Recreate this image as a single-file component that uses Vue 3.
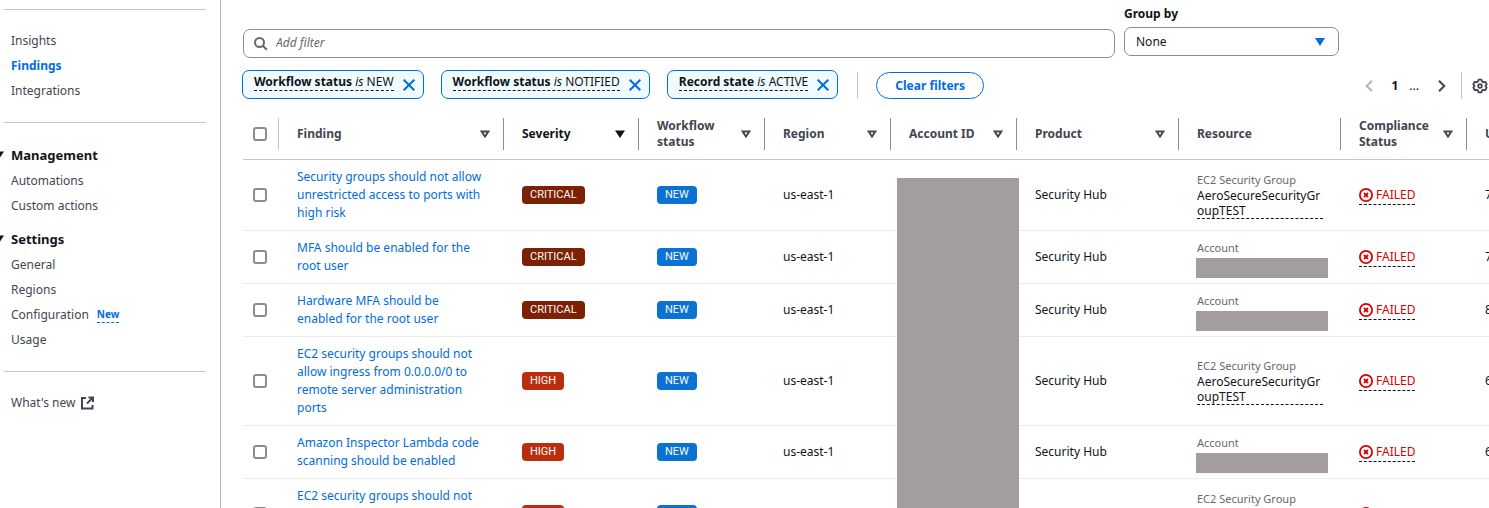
<script setup>
import { ref } from 'vue'

const mainLinks = ['Insights', 'Findings', 'Integrations']
const groups = [
  { title: 'Management', links: [{ text: 'Automations' }, { text: 'Custom actions' }] },
  {
    title: 'Settings',
    links: [{ text: 'General' }, { text: 'Regions' }, { text: 'Configuration', isNew: true }, { text: 'Usage' }],
  },
]

const groupBy = ref('None')
const filters = [
  { field: 'Workflow status', value: 'NEW' },
  { field: 'Workflow status', value: 'NOTIFIED' },
  { field: 'Record state', value: 'ACTIVE' },
]

const columns = [
  { label: 'Finding', cls: 'c-finding', sort: true },
  { label: 'Severity', cls: 'c-severity', sort: true, active: true },
  { label: 'Workflow\nstatus', cls: 'c-medium', sort: true },
  { label: 'Region', cls: 'c-medium', sort: true },
  { label: 'Account ID', cls: 'c-medium', sort: true },
  { label: 'Product', cls: 'c-wide', sort: true },
  { label: 'Resource', cls: 'c-wide' },
  { label: 'Compliance\nStatus', cls: 'c-medium', sort: true },
  { label: 'Updated at', cls: 'c-medium' },
]

const rows = [
  { title: 'Security groups should not allow\nunrestricted access to ports with\nhigh risk', severity: 'CRITICAL', group: true, updated: '7 days ago' },
  { title: 'MFA should be enabled for the\nroot user', severity: 'CRITICAL', updated: '7 days ago' },
  { title: 'Hardware MFA should be\nenabled for the root user', severity: 'CRITICAL', updated: '8 days ago' },
  { title: 'EC2 security groups should not\nallow ingress from 0.0.0.0/0 to\nremote server administration\nports', severity: 'HIGH', group: true, updated: '6 days ago' },
  { title: 'Amazon Inspector Lambda code\nscanning should be enabled', severity: 'HIGH', updated: '6 days ago' },
  { title: 'EC2 security groups should not\nallow ingress from ::/0 to remote\nserver administration ports', severity: 'HIGH', group: true, updated: '6 days ago' },
]
</script>

<template>
  <div class="app">
    <nav class="sidebar" aria-label="Security Hub">
      <hr />
      <a v-for="l in mainLinks" :key="l" href="#" class="nav-link" :class="{ current: l === 'Findings' }">{{ l }}</a>
      <hr />
      <section v-for="g in groups" :key="g.title" class="group">
        <button type="button" class="group-head">
          <svg class="group-caret" width="10" height="8" viewBox="0 0 10 8"><path d="M0 0.500h10L5 8z" fill="#0f141a" /></svg>
          {{ g.title }}
        </button>
        <a v-for="l in g.links" :key="l.text" href="#" class="nav-link">
          {{ l.text }}<span v-if="l.isNew" class="new-flag">New</span>
        </a>
      </section>
      <hr />
      <a href="#" class="nav-link">
        What's new
        <svg class="ext" width="14" height="14" viewBox="0 0 14 14" fill="none" stroke="#424650" stroke-width="2">
          <path d="M6 2H2v10.500h10.500V9M8.500 1.500H13V6M12.500 2L7 7.500" />
        </svg>
      </a>
    </nav>

    <main class="main">
      <div class="controls">
        <label class="search">
          <svg width="14" height="14" viewBox="0 0 14 14" fill="none" stroke="#656871" stroke-width="2">
            <circle cx="5.500" cy="5.500" r="4.500" /><path d="M8.800 8.800L12.800 12.800" />
          </svg>
          <input type="text" placeholder="Add filter" aria-label="Add filter" />
        </label>
        <div class="group-by">
          <label for="group-by">Group by</label>
          <div class="select-box">
            <select id="group-by" v-model="groupBy">
              <option>None</option>
            </select>
            <svg width="10" height="8" viewBox="0 0 10 8"><path d="M0 0h10L5 8z" fill="#006ce0" /></svg>
          </div>
        </div>
      </div>

      <div class="toolbar">
        <div v-for="(f, i) in filters" :key="i" class="token">
          <span class="token-text"><b>{{ f.field }}</b> <i>is</i> {{ f.value }}</span>
          <button type="button" class="icon-btn" aria-label="Remove filter">
            <svg width="12" height="12" viewBox="0 0 12 12" stroke="#006ce0" stroke-width="2"><path d="M0.700 0.700L11.300 11.300M11.300 0.700L0.700 11.300" /></svg>
          </button>
        </div>
        <span class="divider"></span>
        <button type="button" class="clear">Clear filters</button>
        <div class="pager">
          <button type="button" class="icon-btn" aria-label="Previous page" disabled>
            <svg width="8" height="12" viewBox="0 0 8 12" fill="none" stroke="#b4b4bb" stroke-width="2"><path d="M7 0.700L1.700 6L7 11.300" /></svg>
          </button>
          <button type="button" class="page">1</button>
          <span class="dots">...</span>
          <button type="button" class="icon-btn" aria-label="Next page">
            <svg width="8" height="12" viewBox="0 0 8 12" fill="none" stroke="#424650" stroke-width="2"><path d="M1 0.700L6.300 6L1 11.300" /></svg>
          </button>
          <span class="divider"></span>
          <button type="button" class="icon-btn" aria-label="Preferences">
            <svg width="16" height="16" viewBox="0 0 16 16" fill="none" stroke="#424650" stroke-width="1.800" stroke-linejoin="round">
              <path d="M6.500 1.700h3l.6 1.900 1.100.6 2-.4 1.500 2.600L13.400 8l1.300 1.600-1.500 2.600-2-.4-1.100.6-.6 1.900h-3l-.6-1.900-1.100-.6-2 .4-1.500-2.600L2.600 8 1.300 6.400l1.500-2.600 2 .4 1.100-.6z" />
              <circle cx="8" cy="8" r="1.800" />
            </svg>
          </button>
        </div>
      </div>

      <div class="table-wrap">
        <table>
          <thead>
            <tr>
              <th class="c-check" scope="col">
                <div class="head head-check"><input type="checkbox" aria-label="Select all findings" /></div>
              </th>
              <th v-for="c in columns" :key="c.label" :class="c.cls" scope="col">
                <div class="head" :class="{ active: c.active }">
                  <span class="head-label">{{ c.label }}</span>
                  <button v-if="c.sort" type="button" class="icon-btn" :aria-label="'Sort by ' + c.label">
                    <svg width="10" height="8" viewBox="0 0 10 8">
                      <path v-if="c.active" d="M0 0.500h10L5 8z" fill="#0f141a" />
                      <path v-else d="M1.600 1.500h6.800L5 6.600z" fill="none" stroke="#424650" stroke-width="1.900" />
                    </svg>
                  </button>
                </div>
              </th>
            </tr>
          </thead>
          <tbody>
            <tr v-for="(r, i) in rows" :key="i">
              <td class="check-cell"><input type="checkbox" aria-label="Select finding" /></td>
              <td><a href="#" class="finding">{{ r.title }}</a></td>
              <td><span class="badge" :class="r.severity.toLowerCase()">{{ r.severity }}</span></td>
              <td><span class="badge">NEW</span></td>
              <td>us-east-1</td>
              <td></td>
              <td>Security Hub</td>
              <td>
                <div class="res-type">{{ r.group ? 'EC2 Security Group' : 'Account' }}</div>
                <div v-if="r.group" class="res-name">{{ 'AeroSecureSecurityGr\noupTEST' }}</div>
                <div v-else class="redacted"></div>
              </td>
              <td>
                <span class="failed">
                  <svg width="14" height="14" viewBox="0 0 14 14" fill="none" stroke="#db0000" stroke-width="2">
                    <circle cx="7" cy="7" r="6.100" stroke-width="1.800" /><path d="M5 5l4 4M9 5L5 9" stroke-width="1.800" />
                  </svg>
                  FAILED
                </span>
              </td>
              <td>{{ r.updated }}</td>
            </tr>
          </tbody>
        </table>
        <div class="account-mask"></div>
      </div>
    </main>
  </div>
</template>

<style>
body {
  margin: 0;
}
</style>

<style scoped>
.app {
  display: flex;
  height: 100vh;
  overflow: hidden;
  background: #fff;
  color: #0f141a;
  font: 12px/18px "Noto Sans", "Open Sans", sans-serif;
}
.app *,
.app *::before {
  box-sizing: border-box;
}
button,
input,
select {
  font: inherit;
  color: inherit;
  margin: 0;
}
button {
  padding: 0;
  border: 0;
  background: none;
  cursor: pointer;
}
a {
  text-decoration: none;
}
svg {
  flex: none;
  display: block;
}

.sidebar {
  flex: none;
  width: 221px;
  padding: 9px 14px 0 4px;
  border-right: 1px solid #b4b4bb;
}
hr {
  height: 1px;
  margin: 19px 0 18px;
  border: 0;
  background: #c6c6cd;
}
hr:first-child {
  margin-top: 0;
}
.nav-link {
  display: flex;
  align-items: center;
  height: 25px;
  padding-left: 7px;
  color: #424650;
}
.nav-link.current {
  color: #006ce0;
  font-weight: 700;
}
.group + .group {
  margin-top: 7px;
}
.group-head {
  display: flex;
  align-items: center;
  gap: 7px;
  height: 27px;
  margin-left: -10px;
  font-size: 13px;
  font-weight: 700;
}
.new-flag {
  margin-left: 8px;
  border-bottom: 1px dashed #006ce0;
  color: #006ce0;
  font-size: 10px;
  font-weight: 700;
  line-height: 16px;
}
.ext {
  margin-left: 5px;
}

.main {
  flex: 1;
  min-width: 0;
  padding: 5px 0 0 22px;
  overflow: hidden;
}
.controls {
  display: flex;
  gap: 9px;
  padding-right: 150px;
}
.search {
  flex: 1;
  display: flex;
  align-items: center;
  gap: 8px;
  height: 29px;
  margin-top: 24px;
  padding: 0 10px;
  border: 1px solid #8c8c94;
  border-radius: 7px;
}
.search input {
  flex: 1;
  min-width: 0;
  padding: 0 0 1px;
  border: 0;
  outline: 0;
  background: none;
}
.search input::placeholder {
  color: #656871;
  font-style: italic;
  opacity: 1;
}
.group-by {
  width: 215px;
}
.group-by label {
  display: block;
  height: 22px;
  font-weight: 700;
}
.select-box {
  display: grid;
  align-items: center;
}
.select-box > * {
  grid-area: 1 / 1;
}
.select-box svg {
  justify-self: end;
  margin-right: 14px;
  pointer-events: none;
}
.select-box select {
  width: 100%;
  height: 29px;
  padding: 0 11px;
  border: 1px solid #8c8c94;
  border-radius: 7px;
  background: #fff;
  appearance: none;
}

.toolbar {
  display: flex;
  align-items: flex-end;
  height: 29px;
  margin: 12px 0 10px -1px;
  gap: 17px;
}
.token {
  display: flex;
  align-items: center;
  gap: 9px;
  height: 29px;
  padding: 0 8px 0 11px;
  border: 1px solid #006ce0;
  border-radius: 7px;
  background: #f0fbff;
  white-space: nowrap;
}
.token-text {
  margin-bottom: 4px;
  border-bottom: 1px dashed #0f141a;
  line-height: 16px;
}
.icon-btn {
  flex: none;
}
.divider {
  width: 1px;
  height: 27px;
  background: #c6c6cd;
}
.toolbar > .divider {
  margin: 0 1px 0 2px;
}
.clear {
  height: 27px;
  padding: 0 18px;
  border: 1px solid #006ce0;
  border-radius: 14px;
  color: #006ce0;
  font-weight: 700;
}
.pager {
  display: flex;
  align-items: center;
  height: 27px;
  margin-left: auto;
  padding-right: 1px;
}
.page {
  margin-left: 18px;
  font-weight: 700;
}
.dots {
  margin: 0 19px 0 11px;
}
.pager .divider {
  margin: 0 10px 0 15px;
}

.table-wrap {
  position: relative;
}
table {
  width: 1350px;
  border-collapse: separate;
  border-spacing: 0;
  table-layout: fixed;
}
.c-check {
  width: 36px;
}
.c-finding {
  width: 225px;
}
.c-severity {
  width: 135px;
}
.c-medium {
  width: 126px;
}
.c-wide {
  width: 162px;
}
th {
  padding: 9px 0;
  border-bottom: 1px solid #c6c6cd;
  text-align: left;
  color: #424650;
}
.head {
  display: flex;
  align-items: center;
  justify-content: space-between;
  height: 32px;
  padding: 0 13px 0 18px;
  border-right: 1px solid #8c8c94;
  line-height: 16px;
}
.head.active {
  color: #0f141a;
}
.head-check {
  padding: 0 0 0 10px;
  border-color: #c6c6cd;
}
.head-label {
  white-space: pre;
}
input[type="checkbox"] {
  display: block;
  width: 14px;
  height: 14px;
  border: 2px solid #8c8c94;
  border-radius: 3px;
  background: #fff;
  appearance: none;
}
td {
  padding: 8px 0 8px 18px;
  border-bottom: 1px solid #ebebf0;
  vertical-align: middle;
  white-space: nowrap;
}
.check-cell {
  padding-left: 10px;
}
.finding {
  display: block;
  color: #006ce0;
  white-space: pre;
}
.badge {
  display: block;
  width: fit-content;
  padding: 0 8px;
  border-radius: 4px;
  background: #0972d3;
  color: #f9f9fa;
  font-family: Roboto, "Noto Sans", sans-serif;
  font-size: 11px;
  line-height: 18px;
}
.badge.critical {
  background: #7d2105;
}
.badge.high {
  background: #ba2e0f;
}
.res-type {
  color: #656871;
  font-size: 11px;
  line-height: 16px;
}
.res-name {
  width: 126px;
  border-bottom: 1px dashed #0f141a;
  line-height: 15px;
  white-space: pre;
}
.redacted {
  width: 132px;
  height: 20px;
  margin: 2px 0 -4px -1px;
  background: #a49d9e;
}
.failed {
  display: flex;
  align-items: center;
  gap: 3px;
  width: fit-content;
  border-bottom: 1px dashed #0f141a;
  color: #db0000;
}
.account-mask {
  position: absolute;
  top: 69px;
  bottom: 0;
  left: 654px;
  width: 122px;
  background: #a49d9e;
}
</style>
